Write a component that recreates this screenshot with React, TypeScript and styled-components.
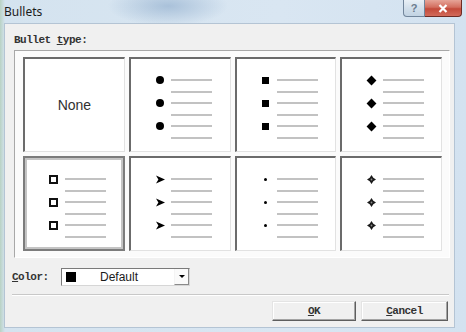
import styled, { createGlobalStyle } from 'styled-components';

const GlobalStyle = createGlobalStyle`
  html, body {
    margin: 0;
    padding: 0;
    background: #d6e4f1;
  }
  * {
    box-sizing: border-box;
  }
`;

const Window = styled.div`
  width: 466px;
  height: 332px;
  display: flex;
  flex-direction: column;
  overflow: hidden;
  background:
    radial-gradient(ellipse 60px 20px at 168px 6px, rgba(150, 178, 208, 0.7), rgba(150, 178, 208, 0) 100%),
    linear-gradient(90deg, #b9d2c4 0px, #d4e3ef 5px, #d9e6f2 60%, #d3e2f0 100%);
`;

const TitleBar = styled.div`
  height: 23px;
  display: flex;
  align-items: flex-start;
  padding-left: 4px;
`;

const Title = styled.div`
  margin-top: 3px;
  font-family: 'Noto Sans', 'Liberation Sans', sans-serif;
  font-size: 12px;
  color: #1b1b1b;
  flex: 1;
`;

const Caption = styled.div`
  display: flex;
  margin-right: 4px;
`;

const HelpButton = styled.div`
  width: 22px;
  height: 17px;
  border: 1px solid #71859b;
  border-top: none;
  border-radius: 0 0 0 4px;
  background: linear-gradient(180deg, #e9f0f6 0%, #d2dfeb 50%, #c2d3e3 100%);
  display: flex;
  align-items: center;
  justify-content: center;
  font-family: 'Liberation Sans', sans-serif;
  font-size: 11px;
  font-weight: 700;
  color: #6b7c8e;
`;

const CloseButton = styled.div`
  width: 37px;
  height: 17px;
  border: 1px solid #6d2b24;
  border-top: none;
  border-left: none;
  border-radius: 0 0 4px 0;
  background: linear-gradient(180deg, #e6a498 0%, #d36e5f 45%, #c34a3a 55%, #d26a5a 100%);
  display: flex;
  align-items: center;
  justify-content: center;
`;

const Client = styled.div`
  flex: 1;
  margin: 0 11px 4px 4px;
  border: 1px solid #b4c4d4;
  background: #f0f0f0;
  padding: 10px 5px 0 7px;
  display: flex;
  flex-direction: column;
`;

const MonoText = styled.span`
  font-family: 'Liberation Mono', 'Courier New', monospace;
  font-size: 11px;
  letter-spacing: -0.5px;
  font-weight: 700;
  color: #333333;
  line-height: 12px;
`;

const Accel = styled.span`
  text-decoration: underline;
  text-underline-offset: 1px;
`;

const GroupLabel = styled(MonoText)`
  display: block;
  margin-left: 2px;
  height: 12px;
`;

const BulletGrid = styled.div`
  margin: 4px 0 0 2px;
  width: 436px;
  border-top: 1px solid #a8a8a8;
  border-left: 1px solid #a8a8a8;
  border-right: 1px solid #ffffff;
  border-bottom: 1px solid #ffffff;
  background: #fbfbfb;
  padding: 6px 7px 6px 8px;
  display: grid;
  grid-template-columns: repeat(4, 1fr);
  grid-auto-rows: 95px;
  gap: 4px;
`;

const Cell = styled.div<{ $selected?: boolean }>`
  background: #ffffff;
  border-top: 2px solid ${(p) => (p.$selected ? '#7c7c7c' : '#6b6b6b')};
  border-left: 2px solid ${(p) => (p.$selected ? '#7c7c7c' : '#6b6b6b')};
  border-right: ${(p) => (p.$selected ? '2px solid #7c7c7c' : '1px solid #e2e2e2')};
  border-bottom: ${(p) => (p.$selected ? '2px solid #7c7c7c' : '1px solid #e2e2e2')};
  box-shadow: ${(p) => (p.$selected ? 'inset 0 0 0 2px #c4c4c4' : 'none')};
  display: flex;
  flex-direction: column;
  align-items: center;
  padding: 15px 0 0 4px;
`;

const NoneCell = styled(Cell)`
  justify-content: center;
  padding: 0;
  font-family: 'Liberation Sans', Arial, sans-serif;
  font-size: 14px;
  color: #303030;
`;

const Row = styled.div<{ $h: number }>`
  display: flex;
  height: ${(p) => p.$h}px;
`;

const BulletSlot = styled.div`
  width: 16px;
  height: 12px;
  display: flex;
  align-items: center;
  justify-content: center;
`;

const Line = styled.div`
  width: 41px;
  height: 2px;
  margin: 5px 0 0 3px;
  background: #c2c2c2;
`;

const Dot = styled.div<{ $size: number }>`
  width: ${(p) => p.$size}px;
  height: ${(p) => p.$size}px;
  border-radius: 50%;
  background: #000;
`;

const Square = styled.div<{ $hollow?: boolean }>`
  width: ${(p) => (p.$hollow ? 9 : 7)}px;
  height: ${(p) => (p.$hollow ? 9 : 7)}px;
  background: ${(p) => (p.$hollow ? '#fff' : '#000')};
  border: ${(p) => (p.$hollow ? '2px solid #111' : 'none')};
`;

const Diamond = styled.div`
  width: 7px;
  height: 7px;
  background: #000;
  transform: rotate(45deg);
`;

const ColorRow = styled.div`
  margin-top: 10px;
  height: 18px;
  display: flex;
  align-items: center;
`;

const ColorLabel = styled(MonoText)`
  width: 49px;
`;

const Select = styled.div`
  width: 129px;
  height: 18px;
  background: #fff;
  border-top: 1px solid #7a7a7a;
  border-left: 1px solid #7a7a7a;
  border-right: 1px solid #d6d6d6;
  border-bottom: 1px solid #d6d6d6;
  display: flex;
  align-items: center;
  padding-left: 4px;
`;

const Swatch = styled.div`
  width: 10px;
  height: 10px;
  background: #000;
`;

const SelectText = styled.span`
  flex: 1;
  margin-left: 24px;
  font-family: 'Liberation Sans', Arial, sans-serif;
  font-size: 12px;
  color: #1a1a1a;
`;

const DropButton = styled.div`
  width: 15px;
  height: 16px;
  background: #fafafa;
  border-left: 1px solid #f4f4f4;
  border-right: 1px solid #8a8a8a;
  border-bottom: 1px solid #8a8a8a;
  display: flex;
  align-items: center;
  justify-content: center;
`;

const Arrow = styled.div`
  width: 0;
  height: 0;
  border-left: 3px solid transparent;
  border-right: 3px solid transparent;
  border-top: 3px solid #000;
`;

const Separator = styled.div`
  margin-top: 8px;
  height: 2px;
  border-top: 1px solid #c8c8c8;
  border-bottom: 1px solid #ffffff;
`;

const ButtonRow = styled.div`
  margin-top: 5px;
  display: flex;
  justify-content: flex-end;
  gap: 5px;
  padding-right: 1px;
`;

const Button = styled.div<{ $w: number }>`
  width: ${(p) => p.$w}px;
  height: 20px;
  background: #f0f0f0;
  border-top: 1px solid #e4e4e4;
  border-left: 1px solid #e4e4e4;
  border-right: 1px solid #5e5e5e;
  border-bottom: 1px solid #5e5e5e;
  box-shadow: inset -1px -1px 0 #a4a4a4, inset 1px 1px 0 #ffffff;
  display: flex;
  align-items: center;
  justify-content: center;
`;

function ArrowHead() {
  return (
    <svg width="9" height="9" viewBox="0 0 9 9">
      <path d="M0 0.5 L9 4.5 L0 8.5 L2.4 4.5 Z" fill="#000" />
    </svg>
  );
}

function Flower() {
  return (
    <svg width="9" height="9" viewBox="0 0 9 9">
      <path d="M4.5 0 L6.3 2.7 L4.5 4.5 L2.7 2.7 Z M9 4.5 L6.3 6.3 L4.5 4.5 L6.3 2.7 Z M4.5 9 L2.7 6.3 L4.5 4.5 L6.3 6.3 Z M0 4.5 L2.7 2.7 L4.5 4.5 L2.7 6.3 Z" fill="#1a1a1a" />
      <circle cx="4.5" cy="4.5" r="0.9" fill="#8a8a8a" />
    </svg>
  );
}

function Preview({ bullet }: { bullet: React.ReactNode }) {
  const rows = [0, 1, 2, 3, 4, 5];
  return (
    <div>
      {rows.map((i) => (
        <Row key={i} $h={i % 2 === 0 ? 12 : 11}>
          <BulletSlot>{i % 2 === 0 ? bullet : null}</BulletSlot>
          <Line />
        </Row>
      ))}
    </div>
  );
}

const bullets: { bullet: React.ReactNode; selected?: boolean }[] = [
  { bullet: <Dot $size={8} /> },
  { bullet: <Square /> },
  { bullet: <Diamond /> },
  { bullet: <Square $hollow />, selected: true },
  { bullet: <ArrowHead /> },
  { bullet: <Dot $size={3} /> },
  { bullet: <Flower /> },
];

export default function App() {
  return (
    <>
      <GlobalStyle />
      <Window>
        <TitleBar>
          <Title>Bullets</Title>
          <Caption>
            <HelpButton>?</HelpButton>
            <CloseButton>
              <svg width="10" height="9" viewBox="0 0 10 9">
                <path d="M1.5 1 L8.5 8 M8.5 1 L1.5 8" stroke="#fff" strokeWidth="2.2" />
              </svg>
            </CloseButton>
          </Caption>
        </TitleBar>
        <Client>
          <GroupLabel>
            Bullet <Accel>t</Accel>ype:
          </GroupLabel>
          <BulletGrid>
            <NoneCell>None</NoneCell>
            {bullets.map((b, i) => (
              <Cell key={i} $selected={b.selected}>
                <Preview bullet={b.bullet} />
              </Cell>
            ))}
          </BulletGrid>
          <ColorRow>
            <ColorLabel>
              <Accel>C</Accel>olor:
            </ColorLabel>
            <Select>
              <Swatch />
              <SelectText>Default</SelectText>
              <DropButton>
                <Arrow />
              </DropButton>
            </Select>
          </ColorRow>
          <Separator />
          <ButtonRow>
            <Button $w={84}>
              <MonoText>
                <Accel>O</Accel>K
              </MonoText>
            </Button>
            <Button $w={87}>
              <MonoText>
                <Accel>C</Accel>ancel
              </MonoText>
            </Button>
          </ButtonRow>
        </Client>
      </Window>
    </>
  );
}
